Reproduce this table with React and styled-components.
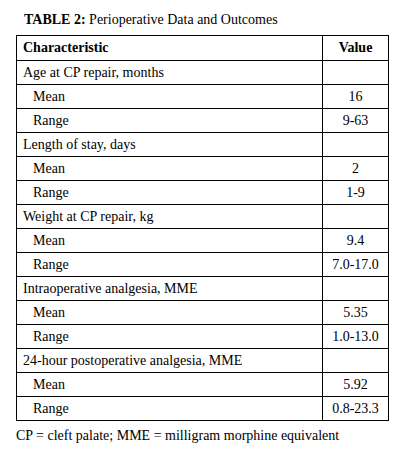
import React from "react";
import styled, { createGlobalStyle } from "styled-components";

const Global = createGlobalStyle`
  html, body { margin: 0; padding: 0; background: #fff; }
  body { font-family: "Liberation Serif", "Times New Roman", serif; color: #000; }
`;

const Page = styled.div`
  padding: 11px 0 0 16px;
  width: 405px;
  box-sizing: border-box;
`;

const Caption = styled.div`
  font-size: 14px;
  line-height: 18px;
  padding-left: 8px;
  margin-bottom: 6px;
  b { font-weight: bold; }
`;

const Table = styled.table`
  border-collapse: collapse;
  width: 373px;
  font-size: 14px;
  table-layout: fixed;
`;

const Cell = styled.td`
  border: 1px solid #000;
  height: ${(p) => (p.$head ? 24 : 23)}px;
  padding: 0 0 0 ${(p) => (p.$indent ? 16 : 6)}px;
  text-align: ${(p) => (p.$center ? "center" : "left")};
  font-weight: ${(p) => (p.$head ? "bold" : "normal")};
  vertical-align: middle;
  line-height: 16px;
  white-space: nowrap;
  ${(p) => p.$center && "padding: 0;"}
`;

const Note = styled.div`
  font-size: 14px;
  line-height: 18px;
  margin-top: 6px;
`;

const groups = [
  { label: "Age at CP repair, months", mean: "16", range: "9-63" },
  { label: "Length of stay, days", mean: "2", range: "1-9" },
  { label: "Weight at CP repair, kg", mean: "9.4", range: "7.0-17.0" },
  { label: "Intraoperative analgesia, MME", mean: "5.35", range: "1.0-13.0" },
  { label: "24-hour postoperative analgesia, MME", mean: "5.92", range: "0.8-23.3" },
];

export default function App() {
  return (
    <Page>
      <Global />
      <Caption>
        <b>TABLE 2:</b> Perioperative Data and Outcomes
      </Caption>
      <Table>
        <colgroup>
          <col />
          <col style={{ width: 66 }} />
        </colgroup>
        <thead>
          <tr>
            <Cell as="th" $head>Characteristic</Cell>
            <Cell as="th" $head $center>Value</Cell>
          </tr>
        </thead>
        <tbody>
          {groups.map((g) => (
            <React.Fragment key={g.label}>
              <tr>
                <Cell>{g.label}</Cell>
                <Cell $center></Cell>
              </tr>
              <tr>
                <Cell $indent>Mean</Cell>
                <Cell $center>{g.mean}</Cell>
              </tr>
              <tr>
                <Cell $indent>Range</Cell>
                <Cell $center>{g.range}</Cell>
              </tr>
            </React.Fragment>
          ))}
        </tbody>
      </Table>
      <Note>CP = cleft palate; MME = milligram morphine equivalent</Note>
    </Page>
  );
}
